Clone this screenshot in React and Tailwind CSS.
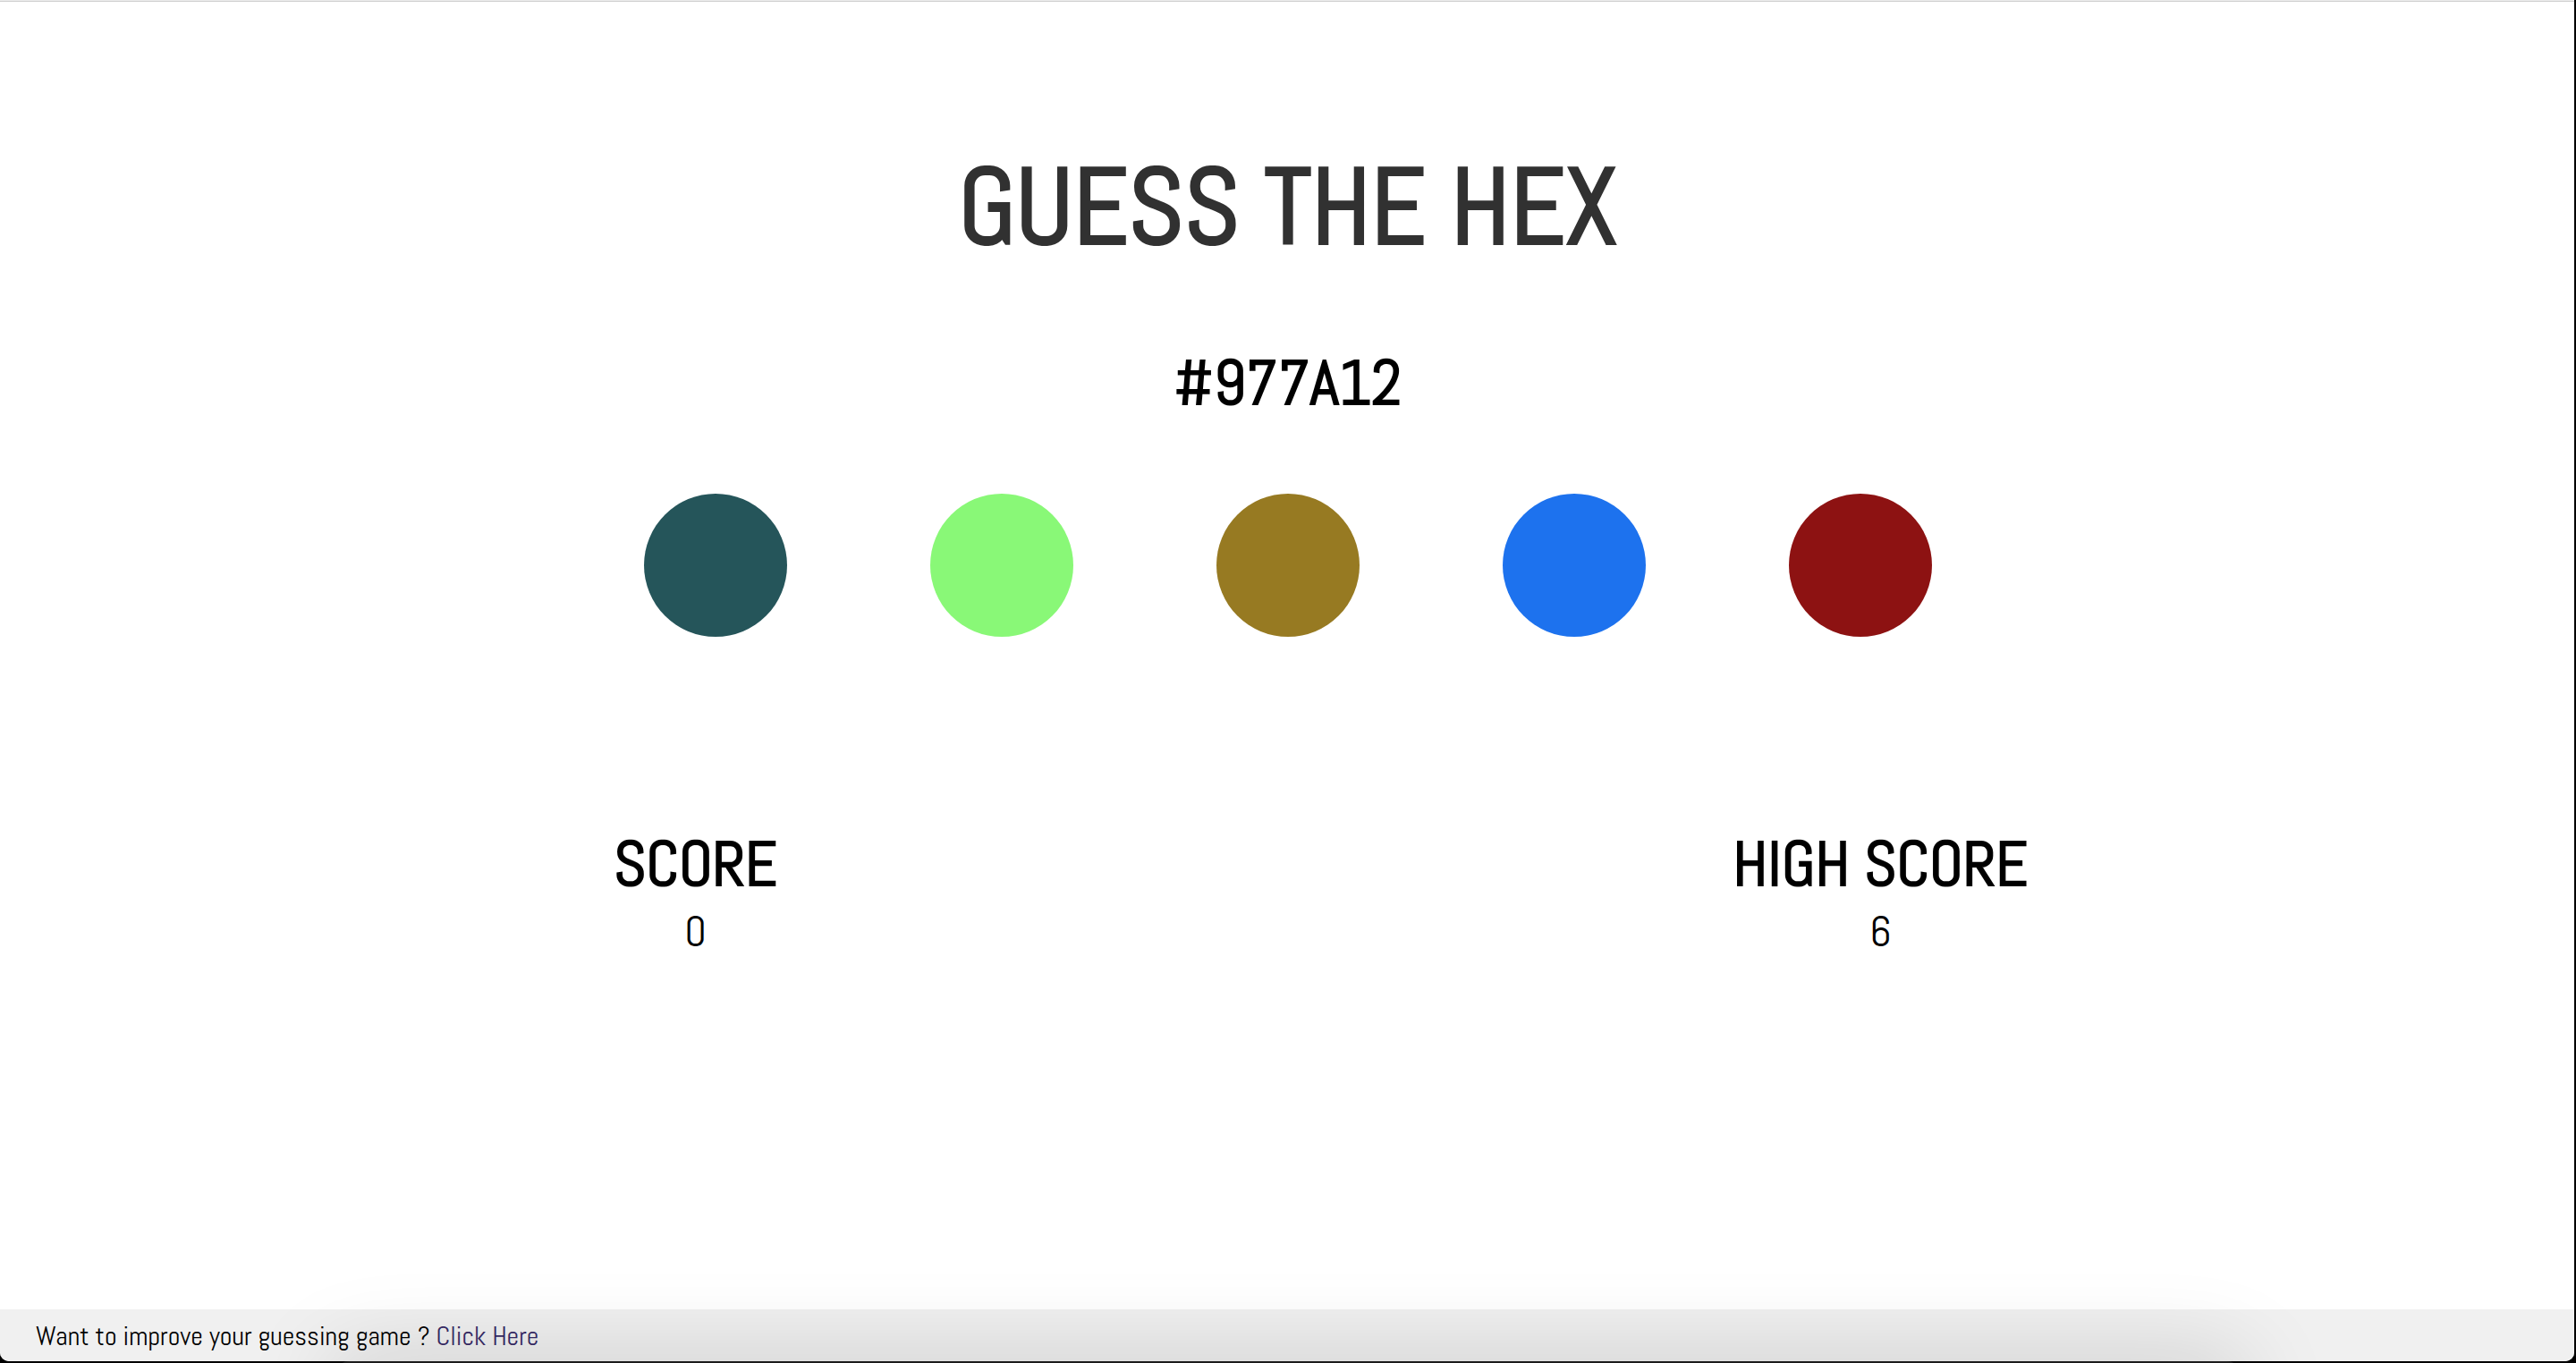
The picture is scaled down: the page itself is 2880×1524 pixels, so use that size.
const SWATCHES = ["#25555A", "#89F877", "#977A22", "#1D72EE", "#8D1212"];

function Stat({ label, value }) {
  return (
    <section className="flex flex-col items-center">
      <h2 className="text-[70px] leading-[92px] font-bold">{label}</h2>
      <p className="text-[48px] leading-[60px]">{value}</p>
    </section>
  );
}

export default function App() {
  return (
    <div className="relative min-h-screen overflow-hidden bg-black pr-0.5 pb-0.5 font-[Abel,sans-serif] text-black">
      <div className="flex min-h-[calc(100vh-2px)] flex-col rounded-b-[10px] bg-white">
        <div className="h-0.5 border-b border-[#cfcfcf] bg-[#ececec]" />
        <main className="-mr-0.5 flex grow flex-col items-center">
          <h1 className="mt-[152px] text-[120px] leading-[154px] font-bold text-[#313131]">
            GUESS THE HEX
          </h1>
          <h2 className="mt-[74px] text-[70px] leading-[92px] font-bold">#977A12</h2>
          <div className="mt-[78px] flex w-1/2 justify-between">
            {SWATCHES.map((color) => (
              <button
                key={color}
                type="button"
                aria-label={`Choose ${color}`}
                className="size-40 rounded-full"
                style={{ backgroundColor: color }}
              />
            ))}
          </div>
          <div className="mt-[208px] grid w-[92%] grid-cols-2">
            <Stat label="SCORE" value="0" />
            <Stat label="HIGH SCORE" value="6" />
          </div>
        </main>
        <footer className="rounded-b-[10px] bg-[#f0f0f0] px-10 pt-2.5 pb-2 text-[30px] leading-[40px]">
          Want to improve your guessing game ?{" "}
          <a href="#learn" className="text-[#362a66]">
            Click Here
          </a>
        </footer>
      </div>
      <div className="pointer-events-none absolute right-[13%] -bottom-[78px] left-[13%] h-20 rounded-2xl bg-[#1c1c1c] shadow-[0_0_100px_4px_rgba(0,0,0,0.15)]" />
    </div>
  );
}
